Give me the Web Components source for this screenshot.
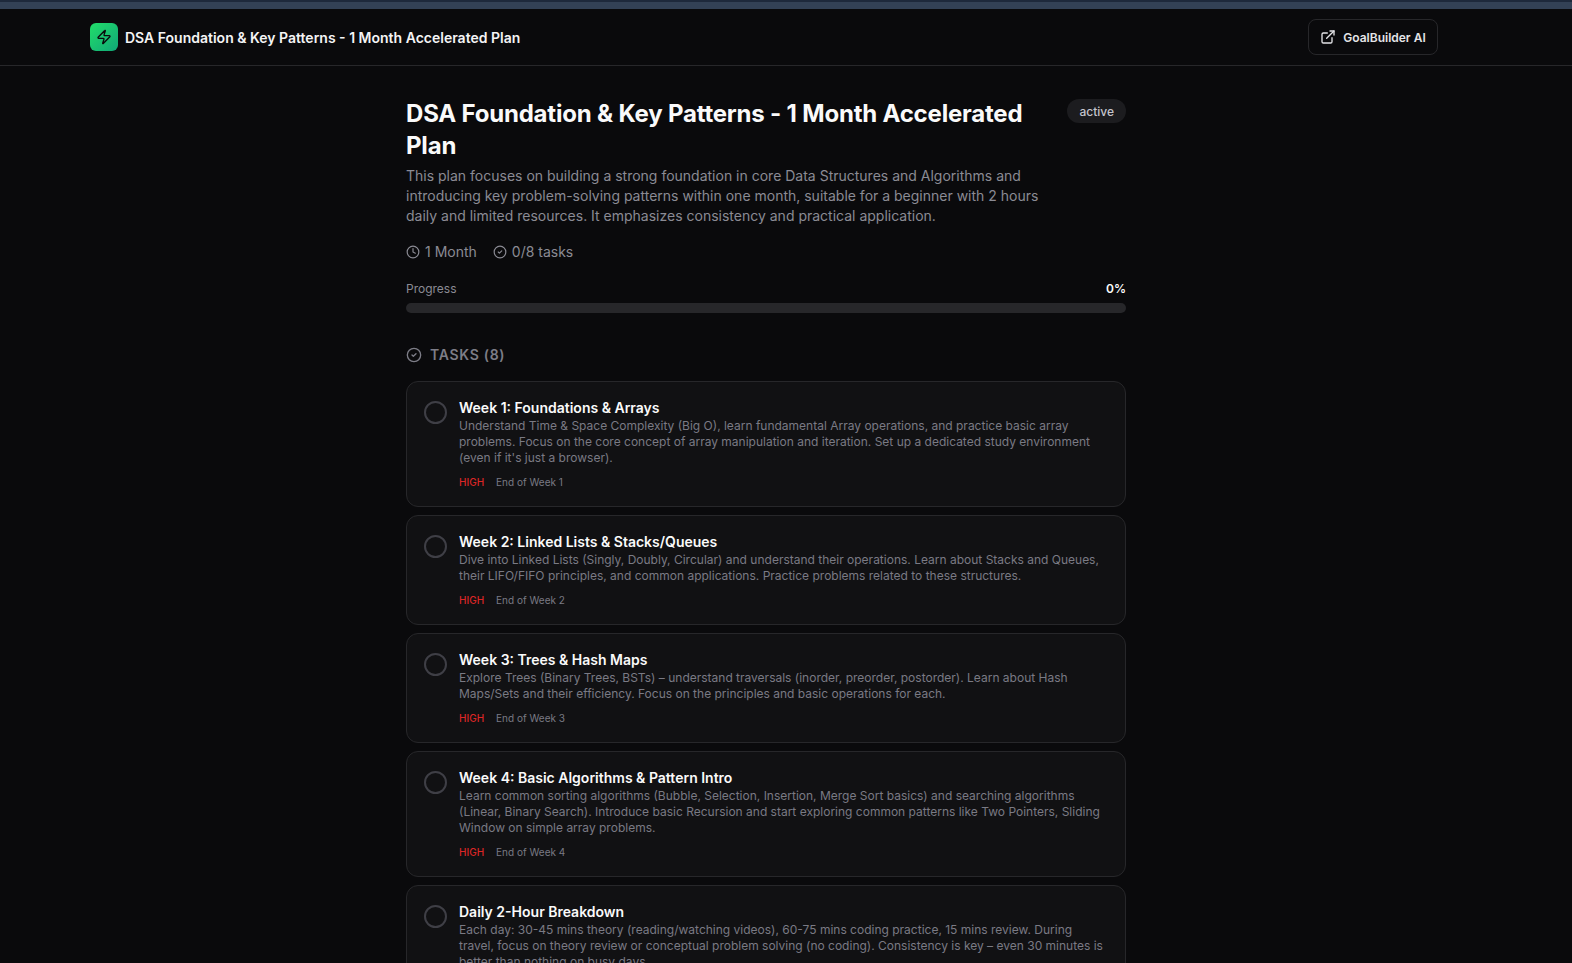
<!DOCTYPE html>
<html lang="en">
<head>
<meta charset="utf-8">
<title>DSA Foundation & Key Patterns</title>
<style>
    html, body {
        margin: 0;
        height: 100%;
        overflow: hidden;
        background: #0a0a0c;
        color: #fafafa;
        font-family: Inter, "Liberation Sans", sans-serif;
    }
</style>
</head>
<body>
<plan-page></plan-page>

<script>
const ICONS = {
    clock: '<circle cx="12" cy="12" r="10"/><path d="M12 6v6l4 2"/>',
    check: '<circle cx="12" cy="12" r="10"/><path d="m9 12 2 2 4-4"/>',
    zap: '<path d="M4 14a1 1 0 0 1-.78-1.63l9.9-10.2a.5.5 0 0 1 .86.46l-1.92 6.02A1 1 0 0 0 13 10h7a1 1 0 0 1 .78 1.63l-9.9 10.2a.5.5 0 0 1-.86-.46l1.92-6.02A1 1 0 0 0 11 14z"/>',
    external: '<path d="M18 13v6a2 2 0 0 1-2 2H5a2 2 0 0 1-2-2V8a2 2 0 0 1 2-2h6"/><path d="m15 3h6v6"/><path d="M10 14 21 3"/>'
};

function icon(name, size, width) {
    return `<svg width="${size}" height="${size}" viewBox="0 0 24 24" fill="none" stroke="currentColor" stroke-width="${width}" stroke-linecap="round" stroke-linejoin="round">${ICONS[name]}</svg>`;
}

class TopBar extends HTMLElement {
    constructor() {
        super();
        this.attachShadow({ mode: 'open' });
        this.shadowRoot.innerHTML = `
            <style>
                :host { display: block; }
                .strip { height: 9px; background: #334155; border-top: 2px solid #1e293b; box-sizing: border-box; }
                header {
                    height: 57px;
                    box-sizing: border-box;
                    border-bottom: 1px solid #27272a;
                    padding: 0 134px 0 90px;
                    display: flex;
                    align-items: center;
                    justify-content: space-between;
                }
                .brand { display: flex; align-items: center; gap: 7px; }
                .logo {
                    width: 28px;
                    height: 28px;
                    border-radius: 6px;
                    background: linear-gradient(135deg, #22dd6a, #10a877);
                    color: #0a0a0c;
                    display: flex;
                    align-items: center;
                    justify-content: center;
                }
                .name { font-size: 14px; font-weight: 600; color: #f4f4f5; }
                button {
                    all: unset;
                    height: 36px;
                    width: 130px;
                    box-sizing: border-box;
                    border: 1px solid #27272a;
                    border-radius: 8px;
                    display: flex;
                    align-items: center;
                    justify-content: center;
                    gap: 7px;
                    font-size: 12px;
                    font-weight: 600;
                    color: #e4e4e7;
                }
            </style>
            <div class="strip"></div>
            <header>
                <div class="brand">
                    <div class="logo">${icon('zap', 16, 2)}</div>
                    <span class="name"><slot></slot></span>
                </div>
                <button>${icon('external', 16, 2)}GoalBuilder AI</button>
            </header>
        `;
    }
}

class PlanSummary extends HTMLElement {
    constructor() {
        super();
        this.attachShadow({ mode: 'open' });
        this.shadowRoot.innerHTML = `
            <style>
                :host { display: block; }
                .head { display: flex; align-items: flex-start; justify-content: space-between; gap: 32px; }
                h1 { margin: 0; font-size: 24px; line-height: 32px; font-weight: 700; color: #fafafa; letter-spacing: -0.2px; }
                .badge {
                    flex: none;
                    margin-top: 1px;
                    height: 24px;
                    padding: 0 12px;
                    border-radius: 12px;
                    background: #1c1c1f;
                    color: #c4c4cc;
                    font-size: 12px;
                    font-weight: 500;
                    display: flex;
                    align-items: center;
                }
                p { margin: 4px 0 0; width: 640px; font-size: 14px; line-height: 20px; color: #8b8b94; }
                .meta { display: flex; gap: 16px; margin-top: 16px; font-size: 14px; line-height: 20px; color: #8b8b94; }
                .meta span { display: flex; align-items: center; gap: 5px; }
                .label { display: flex; justify-content: space-between; margin-top: 19px; font-size: 12px; line-height: 16px; color: #8b8b94; }
                .label b { font-weight: 600; color: #fafafa; }
                .bar { height: 10px; margin-top: 6px; border-radius: 5px; background: #27272a; }
            </style>
            <div class="head">
                <h1>${this.getAttribute('heading')}</h1>
                <span class="badge">active</span>
            </div>
            <p><slot></slot></p>
            <div class="meta">
                <span>${icon('clock', 14, 2)}1 Month</span>
                <span>${icon('check', 14, 2)}0/8 tasks</span>
            </div>
            <div class="label"><span>Progress</span><b>0%</b></div>
            <div class="bar"></div>
        `;
    }
}

class TaskCard extends HTMLElement {
    constructor() {
        super();
        this.attachShadow({ mode: 'open' });
        this.shadowRoot.innerHTML = `
            <style>
                :host {
                    display: flex;
                    flex: none;
                    gap: 12px;
                    box-sizing: border-box;
                    padding: 16px 16px 16px 17px;
                    border: 1px solid #27272a;
                    border-radius: 12px;
                    background: #111113;
                }
                .radio { flex: none; width: 19px; height: 19px; margin-top: 3px; border: 2px solid #3f3f46; border-radius: 50%; }
                .body { min-width: 0; flex: 1; }
                h3 { margin: 0; font-size: 14px; line-height: 20px; font-weight: 600; color: #fafafa; }
                p { margin: 0; font-size: 12px; line-height: 16px; color: #7a7a84; }
                .foot { display: flex; gap: 12px; margin-top: 8px; font-size: 10px; line-height: 16px; color: #7a7a84; }
                .prio { color: #dc2626; font-weight: 500; }
            </style>
            <div class="radio"></div>
            <div class="body">
                <h3>${this.getAttribute('heading')}</h3>
                <p><slot></slot></p>
                <div class="foot"><span class="prio">HIGH</span><span>${this.getAttribute('due') || ''}</span></div>
            </div>
        `;
    }
}

class PlanPage extends HTMLElement {
    constructor() {
        super();
        this.attachShadow({ mode: 'open' });
        this.shadowRoot.innerHTML = `
            <style>
                :host { display: block; height: 100vh; overflow: hidden; position: relative; }
                main { width: 720px; margin: 0 auto; padding-top: 32px; transform: translateX(-20px); }
                .section {
                    display: flex;
                    align-items: center;
                    gap: 8px;
                    margin: 32px 0 16px;
                    font-size: 14px;
                    line-height: 20px;
                    font-weight: 600;
                    letter-spacing: 0.7px;
                    color: #7d7d87;
                }
                .list { display: flex; flex-direction: column; gap: 8px; }
            </style>
            <top-bar>DSA Foundation &amp; Key Patterns - 1 Month Accelerated Plan</top-bar>
            <main>
                <plan-summary heading="DSA Foundation &amp; Key Patterns - 1 Month Accelerated Plan">This plan focuses on building a strong foundation in core Data Structures and Algorithms and introducing key problem-solving patterns within one month, suitable for a beginner with 2 hours daily and limited resources. It emphasizes consistency and practical application.</plan-summary>
                <div class="section">${icon('check', 16, 2)}TASKS (8)</div>
                <div class="list">
                    <task-card heading="Week 1: Foundations &amp; Arrays" due="End of Week 1">Understand Time &amp; Space Complexity (Big O), learn fundamental Array operations, and practice basic array problems. Focus on the core concept of array manipulation and iteration. Set up a dedicated study environment (even if it's just a browser).</task-card>
                    <task-card heading="Week 2: Linked Lists &amp; Stacks/Queues" due="End of Week 2">Dive into Linked Lists (Singly, Doubly, Circular) and understand their operations. Learn about Stacks and Queues, their LIFO/FIFO principles, and common applications. Practice problems related to these structures.</task-card>
                    <task-card heading="Week 3: Trees &amp; Hash Maps" due="End of Week 3">Explore Trees (Binary Trees, BSTs) – understand traversals (inorder, preorder, postorder). Learn about Hash Maps/Sets and their efficiency. Focus on the principles and basic operations for each.</task-card>
                    <task-card heading="Week 4: Basic Algorithms &amp; Pattern Intro" due="End of Week 4">Learn common sorting algorithms (Bubble, Selection, Insertion, Merge Sort basics) and searching algorithms (Linear, Binary Search). Introduce basic Recursion and start exploring common patterns like Two Pointers, Sliding Window on simple array problems.</task-card>
                    <task-card heading="Daily 2-Hour Breakdown" due="Daily">Each day: 30-45 mins theory (reading/watching videos), 60-75 mins coding practice, 15 mins review. During travel, focus on theory review or conceptual problem solving (no coding). Consistency is key – even 30 minutes is better than nothing on busy days.</task-card>
                </div>
            </main>
        `;
    }
}

customElements.define('top-bar', TopBar);
customElements.define('plan-summary', PlanSummary);
customElements.define('task-card', TaskCard);
customElements.define('plan-page', PlanPage);
</script>
</body>
</html>
